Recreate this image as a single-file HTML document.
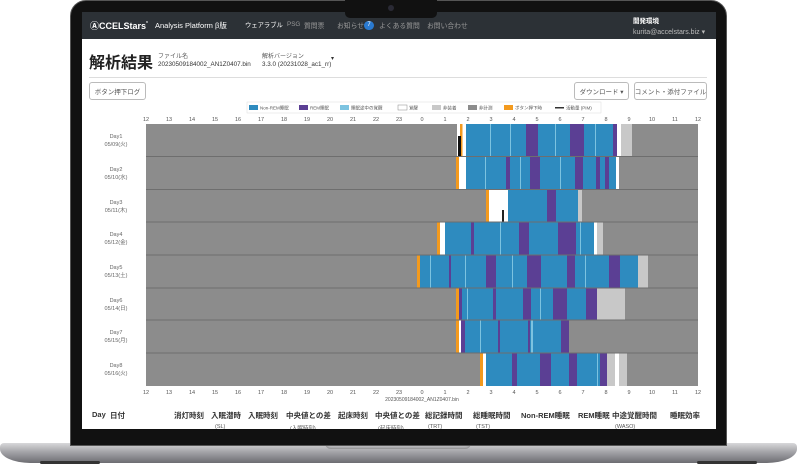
<!DOCTYPE html>
<html><head><meta charset="utf-8"><style>
*{margin:0;padding:0;box-sizing:border-box}
body{width:797px;height:468px;background:#fff;position:relative;overflow:hidden;font-family:"Liberation Sans","Noto Sans CJK JP",sans-serif}
.a{position:absolute;white-space:nowrap}
.btn{position:absolute;border:1px solid #bbb;border-radius:3px;font-size:6.5px;color:#555;display:flex;align-items:center;justify-content:center;background:#fff;white-space:nowrap}
.th{position:absolute;top:410px;font-size:7.5px;color:#333;font-weight:bold;white-space:nowrap}
.sub{position:absolute;top:424px;font-size:5.5px;color:#555}
</style></head><body>
<div class="a" style="left:0;top:443px;width:797px;height:20px;border-radius:4px 4px 30px 30px/4px 4px 14px 14px;background:linear-gradient(#d8d8da,#a9a9ad 40%,#6d6d72)"></div>
<div class="a" style="left:325px;top:443px;width:146px;height:6px;border-radius:0 0 8px 8px;background:#bdbdc0;box-shadow:inset 0 -1px 2px #888"></div>
<div class="a" style="left:40px;top:461px;width:60px;height:3px;background:#333;border-radius:2px"></div>
<div class="a" style="left:697px;top:461px;width:60px;height:3px;background:#333;border-radius:2px"></div>
<div class="a" style="left:70px;top:0;width:657px;height:446px;background:#111;border-radius:16px 16px 0 0;border:1px solid #555"></div>
<div class="a" style="left:82px;top:12px;width:634px;height:417px;background:#fff;overflow:hidden">
 <div class="a" style="left:0;top:0;width:634px;height:27px;background:#2c3136"></div>
</div>
<div class="a" style="left:345px;top:0;width:92px;height:18px;background:#111;border-radius:0 0 5px 5px"></div>
<div class="a" style="left:388px;top:5px;width:6px;height:6px;background:#2a2a35;border-radius:50%"></div>
<div class="a" style="left:90px;top:19px;font-size:9px;color:#fff;font-weight:bold">ⒶCCELStars<sup style="font-size:5px">°</sup></div>
<div class="a" style="left:155px;top:20px;font-size:7.5px;color:#fff">Analysis Platform β版</div>
<div class="a" style="left:245px;top:20px;font-size:6.3px;color:#fff">ウェアラブル</div>
<div class="a" style="left:287px;top:21px;font-size:6.3px;color:#999">PSG</div>
<div class="a" style="left:304px;top:20px;font-size:6.8px;color:#999">質問票</div>
<div class="a" style="left:337px;top:20px;font-size:6.8px;color:#999">お知らせ</div>
<div class="a" style="left:364px;top:21px;width:10px;height:9px;border-radius:5px;background:#2a7ad0;color:#fff;font-size:6px;text-align:center;line-height:9px">7</div>
<div class="a" style="left:379px;top:20px;font-size:6.8px;color:#999">よくある質問</div>
<div class="a" style="left:427px;top:20px;font-size:6.8px;color:#999">お問い合わせ</div>
<div class="a" style="left:633px;top:15px;font-size:6.5px;color:#fff;font-weight:bold">開発環境</div>
<div class="a" style="left:633px;top:28px;font-size:7px;color:#bbb">kurita@accelstars.biz ▾</div>
<div class="a" style="left:89px;top:49px;font-size:16px;font-weight:bold;color:#222">解析結果</div>
<div class="a" style="left:158px;top:51px;font-size:6px;color:#555">ファイル名</div>
<div class="a" style="left:158px;top:61px;font-size:6.3px;color:#333">20230509184002_AN1Z0407.bin</div>
<div class="a" style="left:262px;top:51px;font-size:6px;color:#555">解析バージョン</div>
<div class="a" style="left:262px;top:61px;font-size:6.3px;color:#333">3.3.0 (20231028_ac1_rr)</div>
<div class="a" style="left:331px;top:55px;font-size:6px;color:#333">▾</div>
<div class="a" style="left:89px;top:77px;width:618px;height:1px;background:#ddd"></div>
<div class="btn" style="left:89px;top:82px;width:57px;height:18px">ボタン押下ログ</div>
<div class="btn" style="left:574px;top:82px;width:55px;height:18px">ダウンロード ▾</div>
<div class="btn" style="left:634px;top:82px;width:73px;height:18px">コメント・添付ファイル</div>
<svg class="a" style="left:0;top:0" width="797" height="468" font-family="Liberation Sans,Noto Sans CJK JP,sans-serif">
<rect x="247" y="102" width="354" height="11" fill="#fff" stroke="#ddd" stroke-width="0.5"/>
<g font-size="4.5" fill="#555">
<rect x="249" y="105" width="9" height="5" fill="#2e8bbf"/><text x="260" y="109.5">Non-REM睡眠</text>
<rect x="299" y="105" width="9" height="5" fill="#5b3f94"/><text x="310" y="109.5">REM睡眠</text>
<rect x="340" y="105" width="9" height="5" fill="#7cc3e0"/><text x="351" y="109.5">睡眠途中の覚醒</text>
<rect x="398" y="105" width="9" height="5" fill="#fff" stroke="#888" stroke-width=".5"/><text x="409" y="109.5">覚醒</text>
<rect x="432" y="105" width="9" height="5" fill="#c8c8c8"/><text x="443" y="109.5">非装着</text>
<rect x="468" y="105" width="9" height="5" fill="#8c8c8c"/><text x="479" y="109.5">非計測</text>
<rect x="504" y="105" width="9" height="5" fill="#f39a1e"/><text x="515" y="109.5">ボタン押下時</text>
<rect x="555" y="107" width="9" height="1.5" fill="#333"/><text x="566" y="109.5">活動量 (PIM)</text>
</g>
<g font-size="5.5" fill="#555" text-anchor="middle">
<text x="146" y="121">12</text><text x="169" y="121">13</text><text x="192" y="121">14</text><text x="215" y="121">15</text><text x="238" y="121">16</text><text x="261" y="121">17</text><text x="284" y="121">18</text><text x="307" y="121">19</text><text x="330" y="121">20</text><text x="353" y="121">21</text><text x="376" y="121">22</text><text x="399" y="121">23</text><text x="422" y="121">0</text><text x="445" y="121">1</text><text x="468" y="121">2</text><text x="491" y="121">3</text><text x="514" y="121">4</text><text x="537" y="121">5</text><text x="560" y="121">6</text><text x="583" y="121">7</text><text x="606" y="121">8</text><text x="629" y="121">9</text><text x="652" y="121">10</text><text x="675" y="121">11</text><text x="698" y="121">12</text>
<text x="146" y="394">12</text><text x="169" y="394">13</text><text x="192" y="394">14</text><text x="215" y="394">15</text><text x="238" y="394">16</text><text x="261" y="394">17</text><text x="284" y="394">18</text><text x="307" y="394">19</text><text x="330" y="394">20</text><text x="353" y="394">21</text><text x="376" y="394">22</text><text x="399" y="394">23</text><text x="422" y="394">0</text><text x="445" y="394">1</text><text x="468" y="394">2</text><text x="491" y="394">3</text><text x="514" y="394">4</text><text x="537" y="394">5</text><text x="560" y="394">6</text><text x="583" y="394">7</text><text x="606" y="394">8</text><text x="629" y="394">9</text><text x="652" y="394">10</text><text x="675" y="394">11</text><text x="698" y="394">12</text>
<text x="422" y="401" font-size="5">20230509184002_AN1Z0407.bin</text>
</g>
<g font-size="5.5" fill="#666" text-anchor="middle">
<text x="116" y="138">Day1</text><text x="116" y="146">05/09(火)</text>
<text x="116" y="171">Day2</text><text x="116" y="179">05/10(水)</text>
<text x="116" y="204">Day3</text><text x="116" y="212">05/11(木)</text>
<text x="116" y="236">Day4</text><text x="116" y="244">05/12(金)</text>
<text x="116" y="269">Day5</text><text x="116" y="277">05/13(土)</text>
<text x="116" y="302">Day6</text><text x="116" y="310">05/14(日)</text>
<text x="116" y="334">Day7</text><text x="116" y="342">05/15(月)</text>
<text x="116" y="367">Day8</text><text x="116" y="375">05/16(火)</text>
</g>
<rect x="146" y="124" width="552" height="262" fill="#8c8c8c"/>
<g transform="translate(0,124)">
<rect x="457" y="0" width="9" height="32" fill="#fff"/><rect x="460" y="0" width="2.5" height="32" fill="#f39a1e"/>
<rect x="466" y="0" width="151" height="32" fill="#2e8bbf"/>
<rect x="526" y="0" width="12" height="32" fill="#5b3f94"/><rect x="570" y="0" width="14" height="32" fill="#5b3f94"/><rect x="613" y="0" width="4" height="32" fill="#5b3f94"/>
<rect x="617" y="0" width="4" height="32" fill="#fff"/><rect x="621" y="0" width="11" height="32" fill="#c8c8c8"/>
<rect x="490" y="0" width="1" height="32" fill="#7cc3e0"/><rect x="510" y="0" width="1" height="32" fill="#7cc3e0"/><rect x="555" y="0" width="1" height="32" fill="#7cc3e0"/><rect x="595" y="0" width="1" height="32" fill="#7cc3e0"/>
<rect x="458" y="12" width="3" height="20" fill="#111"/>
</g>
<g transform="translate(0,157)">
<rect x="456" y="0" width="3" height="32" fill="#f39a1e"/><rect x="459" y="0" width="7" height="32" fill="#fff"/>
<rect x="466" y="0" width="150" height="32" fill="#2e8bbf"/>
<rect x="506" y="0" width="4" height="32" fill="#5b3f94"/><rect x="530" y="0" width="10" height="32" fill="#5b3f94"/><rect x="575" y="0" width="8" height="32" fill="#5b3f94"/><rect x="596" y="0" width="4" height="32" fill="#5b3f94"/><rect x="605" y="0" width="4" height="32" fill="#5b3f94"/>
<rect x="616" y="0" width="3" height="32" fill="#fff"/>
<rect x="485" y="0" width="1" height="32" fill="#7cc3e0"/><rect x="520" y="0" width="1" height="32" fill="#7cc3e0"/><rect x="560" y="0" width="1" height="32" fill="#7cc3e0"/>
</g>
<g transform="translate(0,190)">
<rect x="486" y="0" width="3" height="32" fill="#f39a1e"/><rect x="489" y="0" width="19" height="32" fill="#fff"/>
<rect x="508" y="0" width="70" height="32" fill="#2e8bbf"/><rect x="547" y="0" width="9" height="32" fill="#5b3f94"/>
<rect x="578" y="0" width="4" height="32" fill="#c8c8c8"/>
<rect x="502" y="20" width="2" height="12" fill="#222"/>
</g>
<g transform="translate(0,222)">
<rect x="437" y="0" width="3" height="33" fill="#f39a1e"/><rect x="440" y="0" width="5" height="33" fill="#fff"/>
<rect x="445" y="0" width="149" height="33" fill="#2e8bbf"/>
<rect x="471" y="0" width="3" height="33" fill="#5b3f94"/><rect x="519" y="0" width="10" height="33" fill="#5b3f94"/><rect x="558" y="0" width="18" height="33" fill="#5b3f94"/>
<rect x="594" y="0" width="3" height="33" fill="#fff"/><rect x="597" y="0" width="6" height="33" fill="#c8c8c8"/>
<rect x="500" y="0" width="1" height="33" fill="#7cc3e0"/><rect x="580" y="0" width="1" height="33" fill="#7cc3e0"/>
</g>
<g transform="translate(0,255)">
<rect x="417" y="0" width="3" height="33" fill="#f39a1e"/>
<rect x="420" y="0" width="218" height="33" fill="#2e8bbf"/>
<rect x="449" y="0" width="2" height="33" fill="#5b3f94"/><rect x="486" y="0" width="10" height="33" fill="#5b3f94"/><rect x="527" y="0" width="14" height="33" fill="#5b3f94"/><rect x="567" y="0" width="8" height="33" fill="#5b3f94"/><rect x="609" y="0" width="11" height="33" fill="#5b3f94"/>
<rect x="638" y="0" width="10" height="33" fill="#c8c8c8"/>
<rect x="430" y="0" width="1" height="33" fill="#7cc3e0"/><rect x="465" y="0" width="1" height="33" fill="#7cc3e0"/><rect x="512" y="0" width="1" height="33" fill="#7cc3e0"/><rect x="585" y="0" width="1" height="33" fill="#7cc3e0"/>
</g>
<g transform="translate(0,288)">
<rect x="456" y="0" width="3" height="32" fill="#f39a1e"/>
<rect x="459" y="0" width="138" height="32" fill="#2e8bbf"/>
<rect x="459" y="0" width="3" height="32" fill="#5b3f94"/><rect x="493" y="0" width="3" height="32" fill="#5b3f94"/><rect x="523" y="0" width="8" height="32" fill="#5b3f94"/><rect x="553" y="0" width="14" height="32" fill="#5b3f94"/><rect x="586" y="0" width="11" height="32" fill="#5b3f94"/>
<rect x="597" y="0" width="28" height="32" fill="#c8c8c8"/>
<rect x="467" y="0" width="1" height="32" fill="#7cc3e0"/><rect x="540" y="0" width="1" height="32" fill="#7cc3e0"/>
</g>
<g transform="translate(0,320)">
<rect x="456" y="0" width="3" height="33" fill="#f39a1e"/><rect x="459" y="0" width="2" height="33" fill="#fff"/>
<rect x="461" y="0" width="108" height="33" fill="#2e8bbf"/>
<rect x="461" y="0" width="4" height="33" fill="#5b3f94"/><rect x="498" y="0" width="2" height="33" fill="#5b3f94"/><rect x="528" y="0" width="2" height="33" fill="#5b3f94"/><rect x="561" y="0" width="8" height="33" fill="#5b3f94"/>
<rect x="480" y="0" width="1" height="33" fill="#7cc3e0"/><rect x="531" y="0" width="2" height="33" fill="#7cc3e0"/>
</g>
<g transform="translate(0,353)">
<rect x="480" y="0" width="3" height="33" fill="#f39a1e"/><rect x="483" y="0" width="3" height="33" fill="#fff"/>
<rect x="486" y="0" width="121" height="33" fill="#2e8bbf"/>
<rect x="512" y="0" width="5" height="33" fill="#5b3f94"/><rect x="540" y="0" width="11" height="33" fill="#5b3f94"/><rect x="569" y="0" width="8" height="33" fill="#5b3f94"/><rect x="600" y="0" width="7" height="33" fill="#5b3f94"/>
<rect x="607" y="0" width="8" height="33" fill="#c8c8c8"/><rect x="615" y="0" width="4" height="33" fill="#fff"/><rect x="619" y="0" width="8" height="33" fill="#c8c8c8"/>
<rect x="597" y="0" width="1" height="33" fill="#7cc3e0"/>
</g>
<g fill="#6e6e6e">
<rect x="146" y="156" width="552" height="1"/><rect x="146" y="189" width="552" height="1"/><rect x="146" y="221.5" width="552" height="1"/><rect x="146" y="254.5" width="552" height="1"/><rect x="146" y="287.5" width="552" height="1"/><rect x="146" y="319.5" width="552" height="1"/><rect x="146" y="352.5" width="552" height="1"/>
</g>
</svg>
<div class="th" style="left:92px">Day</div>
<div class="th" style="left:110px">日付</div>
<div class="th" style="left:174px">消灯時刻</div>
<div class="th" style="left:211px">入眠潜時</div>
<div class="th" style="left:248px">入眠時刻</div>
<div class="th" style="left:286px">中央値との差</div>
<div class="th" style="left:338px">起床時刻</div>
<div class="th" style="left:375px">中央値との差</div>
<div class="th" style="left:425px">総記録時間</div>
<div class="th" style="left:473px">総睡眠時間</div>
<div class="th" style="left:521px">Non-REM睡眠</div>
<div class="th" style="left:578px">REM睡眠</div>
<div class="th" style="left:612px">中途覚醒時間</div>
<div class="th" style="left:670px">睡眠効率</div>
<div class="sub" style="left:215px">(SL)</div>
<div class="sub" style="left:290px">(入眠時刻)</div>
<div class="sub" style="left:378px">(起床時刻)</div>
<div class="sub" style="left:428px">(TRT)</div>
<div class="sub" style="left:476px">(TST)</div>
<div class="sub" style="left:615px">(WASO)</div>
<div class="a" style="left:82px;top:429px;width:634px;height:11px;background:#111"></div>
</body></html>
